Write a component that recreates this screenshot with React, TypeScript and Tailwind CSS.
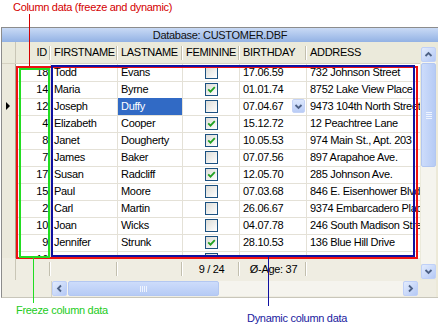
import React from 'react';

type Row = [number, string, string, boolean, string, string];

const rows: Row[] = [
  [18, 'Todd', 'Evans', false, '17.06.59', '732 Johnson Street'],
  [14, 'Maria', 'Byrne', true, '01.01.74', '8752 Lake View Place'],
  [12, 'Joseph', 'Duffy', false, '07.04.67', '9473 104th North Street'],
  [4, 'Elizabeth', 'Cooper', true, '15.12.72', '12 Peachtree Lane'],
  [8, 'Janet', 'Dougherty', true, '10.05.53', '974 Main St., Apt. 203'],
  [7, 'James', 'Baker', false, '07.07.56', '897 Arapahoe Ave.'],
  [17, 'Susan', 'Radcliff', true, '12.05.70', '285 Johnson Ave.'],
  [15, 'Paul', 'Moore', false, '07.03.68', '846 E. Eisenhower Blvd.'],
  [2, 'Carl', 'Martin', false, '26.06.67', '9374 Embarcadero Place'],
  [10, 'Joan', 'Wicks', false, '04.07.78', '246 South Madison Street'],
  [9, 'Jennifer', 'Strunk', true, '28.10.53', '136 Blue Hill Drive'],
  [16, 'Karen', 'Cole', false, '01.01.75', '1043 Lyons Avenue'],
];

const cols = 'grid grid-cols-[14px_35px_67px_65px_57px_67px_113px]';

const Check = ({ on }: { on: boolean }) => (
  <div className="w-[13px] h-[13px] border border-[#1c5180] bg-linear-to-br from-[#dcdcd7] to-white flex items-center justify-center">
    {on && (
      <svg width="9" height="9" viewBox="0 0 9 9">
        <path d="M1.2 4.3 L3.5 6.6 L7.8 2.2" stroke="#21a121" strokeWidth="1.8" fill="none" />
      </svg>
    )}
  </div>
);

const arrows: Record<string, string> = {
  up: 'M1.5 6 L4.5 3 L7.5 6',
  down: 'M1.5 3 L4.5 6 L7.5 3',
  left: 'M6 1.5 L3 4.5 L6 7.5',
  right: 'M3 1.5 L6 4.5 L3 7.5',
};

const ScrollBtn = ({ dir }: { dir: string }) => (
  <div className="w-[15px] h-[15px] shrink-0 rounded-[2px] border border-[#bfd0f8] bg-linear-to-br from-[#e3ecfd] to-[#b5c9f5] flex items-center justify-center">
    <svg width="9" height="9" viewBox="0 0 9 9">
      <path d={arrows[dir]} stroke="#4d6185" strokeWidth="1.8" fill="none" />
    </svg>
  </div>
);

const Sep = () => <div className="w-[2px] h-[14px] shrink-0 border-l border-[#c2bfae] border-r border-r-white" />;

const HeadCell = ({ label, right }: { label: string; right?: boolean }) => (
  <div className="flex items-center">
    <span className={`flex-1 whitespace-nowrap overflow-hidden ${right ? 'text-right pr-[2px]' : 'pl-[3px]'}`}>{label}</span>
    <Sep />
  </div>
);

const App: React.FC = () => {
  return (
    <div
      className="relative w-[438px] h-[328px] overflow-hidden bg-white text-[11px] tracking-[-0.3px] text-black"
      style={{ fontFamily: '"Liberation Sans", Arial, sans-serif' }}
    >
      <div className="h-[27px] pl-[13px] pt-[1px] leading-[13px] text-[#d40000]">Column data (freeze and dynamic)</div>

      <div className="ml-[1px] h-[271px] border-l border-t border-b border-[#8c8c8c] border-b-[#c8c6ba] bg-[#ece9d8] flex flex-col">
        <div className="h-[14px] bg-linear-to-b from-[#c9daf5] to-[#93b2e4] flex items-center justify-center leading-[14px] text-[#111]">
          Database: CUSTOMER.DBF
        </div>
        <div className="flex flex-1">
          <div className="w-[418px] flex flex-col">
            <div className={`${cols} h-[22px] bg-[#ebeadb] border-b border-[#d6d2c2]`}>
              <div className="border-r border-[#c9c6b6]" />
              <HeadCell label="ID" right />
              <HeadCell label="FIRSTNAME" />
              <HeadCell label="LASTNAME" />
              <HeadCell label="FEMININE" />
              <HeadCell label="BIRTHDAY" />
              <div className="flex items-center pl-[3px] whitespace-nowrap">ADDRESS</div>
            </div>

            <div className="h-[194px] overflow-hidden bg-white">
              {rows.map((r, i) => (
                <div key={i} className={`${cols} h-[17px]`}>
                  <div className="bg-[#ebe9dc] border-b border-[#cfccbd] border-r border-r-[#a9a693] flex items-center pl-[4px]">
                    {i === 2 && (
                      <svg width="5" height="8" viewBox="0 0 5 8">
                        <path d="M0 0 L4 4 L0 8 Z" fill="#000" />
                      </svg>
                    )}
                  </div>
                  <div className="border-b border-r border-[#e4e1d7] flex items-center justify-end pr-[2px]">{r[0]}</div>
                  <div className="border-b border-r border-[#e4e1d7] flex items-center pl-[3px] whitespace-nowrap overflow-hidden">{r[1]}</div>
                  <div className="border-b border-r border-[#e4e1d7] flex items-stretch whitespace-nowrap overflow-hidden">
                    <div className={`flex-1 flex items-center pl-[3px] ${i === 2 ? 'bg-[#316ac5] text-white' : ''}`}>{r[2]}</div>
                  </div>
                  <div className="border-b border-r border-[#e4e1d7] flex items-center justify-center">
                    <Check on={r[3]} />
                  </div>
                  <div className="border-b border-r border-[#e4e1d7] flex items-center pl-[3px] whitespace-nowrap">
                    <span className="flex-1">{r[4]}</span>
                    {i === 2 && (
                      <div className="mr-[1px] w-[13px] h-[14px] rounded-[2px] border border-[#c4d3f6] bg-linear-to-b from-[#dde8fd] to-[#b9ccf6] flex items-center justify-center">
                        <svg width="9" height="9" viewBox="0 0 9 9">
                          <path d={arrows.down} stroke="#4d6185" strokeWidth="1.8" fill="none" />
                        </svg>
                      </div>
                    )}
                  </div>
                  <div className="border-b border-[#e4e1d7] flex items-center pl-[3px] whitespace-nowrap overflow-hidden">{r[5]}</div>
                </div>
              ))}
            </div>

            <div className={`${cols} h-[22px] bg-[#efede2]`}>
              <div className="border-r border-[#c9c6b6]" />
              <div className="flex items-center justify-end"><Sep /></div>
              <div className="flex items-center justify-end"><Sep /></div>
              <div className="flex items-center justify-end"><Sep /></div>
              <div className="flex items-center">
                <span className="flex-1 text-center pl-[2px]">9 / 24</span>
                <Sep />
              </div>
              <div className="flex items-center">
                <span className="flex-1 text-center pl-[2px]">Ø-Age: 37</span>
                <Sep />
              </div>
              <div />
            </div>

            <div className="h-[17px] flex items-start pt-[1px] bg-[#efede2]">
              <div className="w-[50px] self-stretch border-r border-[#d5d2c3]" />
              <ScrollBtn dir="left" />
              <div className="flex-1 h-[15px] bg-[#f5f4ee] pl-[1px]">
                <div className="w-[151px] h-[15px] rounded-[2px] border border-[#b3c7f1] bg-linear-to-b from-[#cddcfb] to-[#b6cbf5] flex items-center justify-center gap-[1px]">
                  <div className="w-[1px] h-[6px] bg-[#eef3fe]" />
                  <div className="w-[1px] h-[6px] bg-[#eef3fe]" />
                  <div className="w-[1px] h-[6px] bg-[#eef3fe]" />
                  <div className="w-[1px] h-[6px] bg-[#eef3fe]" />
                </div>
              </div>
              <ScrollBtn dir="right" />
              <div className="w-[2px]" />
            </div>
          </div>

          <div className="w-[16px] flex flex-col">
            <div className="h-[238px] flex flex-col bg-[#ebeadb] pl-[1px]">
              <div className="h-[5px]" />
              <ScrollBtn dir="up" />
              <div className="flex-1 bg-[#f5f4ee] pt-[1px]">
                <div className="w-[15px] h-[104px] rounded-[2px] border border-[#b3c7f1] bg-linear-to-r from-[#cddcfb] to-[#b6cbf5] flex flex-col items-center justify-center gap-[1px]">
                  <div className="w-[6px] h-[1px] bg-[#eef3fe]" />
                  <div className="w-[6px] h-[1px] bg-[#eef3fe]" />
                  <div className="w-[6px] h-[1px] bg-[#eef3fe]" />
                  <div className="w-[6px] h-[1px] bg-[#eef3fe]" />
                </div>
              </div>
              <ScrollBtn dir="down" />
              <div className="h-[1px]" />
            </div>
            <div className="flex-1 bg-[#efede2]" />
          </div>
        </div>
      </div>

      <div className="grid grid-cols-[247px_1fr] h-[30px]">
        <div className="pl-[16px] pt-[6px] leading-[13px] text-[#22cc22]">Freeze column data</div>
        <div className="pt-[14px] leading-[13px] text-[#1a1aa0]">Dynamic column data</div>
      </div>

      {/* annotation overlays */}
      <div className="absolute left-[29px] top-[14px] w-[1px] h-[52px] bg-[#d40000]" />
      <div className="absolute left-[16px] top-[66px] w-[402px] h-[193px] border-2 border-[#ee1111]" />
      <div className="absolute left-[19px] top-[68px] w-[31px] h-[190px] border-2 border-[#22dd22]" />
      <div className="absolute left-[51px] top-[65px] w-[364px] h-[192px] border-2 border-[#1010a0]" />
      <div className="absolute left-[33px] top-[258px] w-[1px] h-[45px] bg-[#22dd22]" />
      <div className="absolute left-[268px] top-[257px] w-[1px] h-[49px] bg-[#1010a0]" />
    </div>
  );
};

export default App;
